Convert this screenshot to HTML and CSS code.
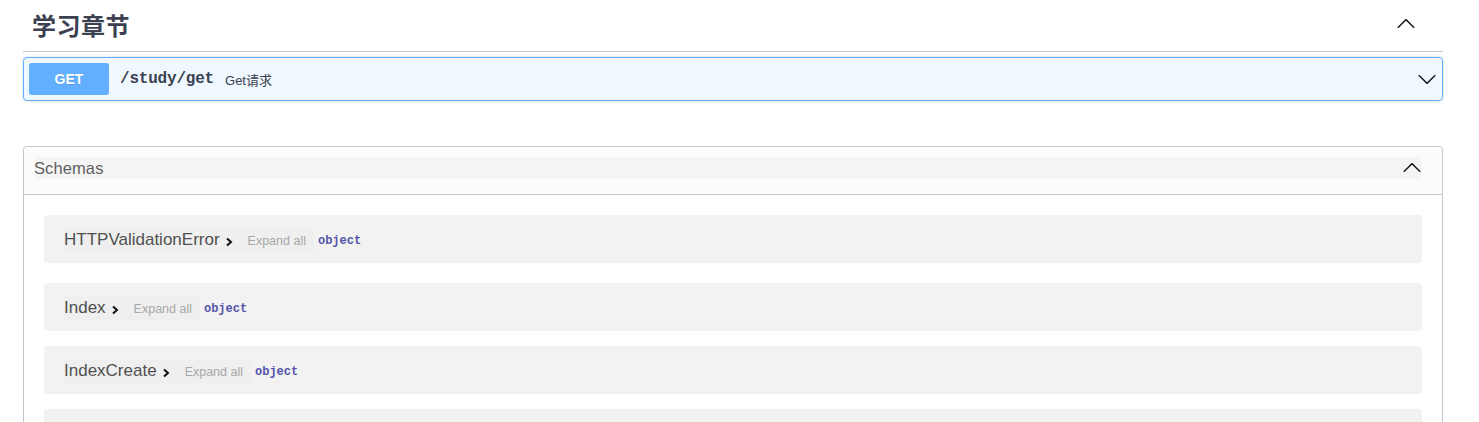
FILE: index.html
```html
<!DOCTYPE html>
<html lang="zh">
<head>
<meta charset="utf-8">
<title>Swagger</title>
<link rel="stylesheet" href="styles.css">
</head>
<body>
<div class="wrapper">
  <h3 class="tag">
    <span class="tag-name">学习章节</span>
    <svg class="arrow up" viewBox="0 0 20 20" width="20" height="20"><path d="M17.418 6.109c.272-.268.709-.268.979 0s.271.701 0 .969l-7.908 7.83c-.27.268-.707.268-.979 0l-7.908-7.83c-.27-.268-.27-.701 0-.969.271-.268.709-.268.979 0L10 13.25l7.418-7.141z"/></svg>
  </h3>

  <div class="opblock">
    <span class="method">GET</span>
    <span class="path">/study/get</span>
    <span class="desc">Get请求</span>
    <svg class="arrow down" viewBox="0 0 20 20" width="20" height="20"><path d="M17.418 6.109c.272-.268.709-.268.979 0s.271.701 0 .969l-7.908 7.83c-.27.268-.707.268-.979 0l-7.908-7.83c-.27-.268-.27-.701 0-.969.271-.268.709-.268.979 0L10 13.25l7.418-7.141z"/></svg>
  </div>

  <section class="models">
    <div class="models-head">
      <div class="models-bar">
        <span class="models-title">Schemas</span>
        <svg class="arrow up" viewBox="0 0 20 20" width="20" height="20"><path d="M17.418 6.109c.272-.268.709-.268.979 0s.271.701 0 .969l-7.908 7.83c-.27.268-.707.268-.979 0l-7.908-7.83c-.27-.268-.27-.701 0-.969.271-.268.709-.268.979 0L10 13.25l7.418-7.141z"/></svg>
      </div>
    </div>
    <div class="models-body">
      <div class="model first">
        <span class="model-name">HTTPValidationError<svg class="caret" viewBox="0 0 10 12" width="10" height="12"><path d="M3 2.5l4 3.5-4 3.5"/></svg></span>
        <span class="expand">Expand all</span>
        <span class="ptype">object</span>
      </div>
      <div class="model">
        <span class="model-name">Index<svg class="caret" viewBox="0 0 10 12" width="10" height="12"><path d="M3 2.5l4 3.5-4 3.5"/></svg></span>
        <span class="expand">Expand all</span>
        <span class="ptype">object</span>
      </div>
      <div class="model">
        <span class="model-name">IndexCreate<svg class="caret" viewBox="0 0 10 12" width="10" height="12"><path d="M3 2.5l4 3.5-4 3.5"/></svg></span>
        <span class="expand">Expand all</span>
        <span class="ptype">object</span>
      </div>
      <div class="model"></div>
    </div>
  </section>
</div>
</body>
</html>
```

FILE: styles.css
```css
* { box-sizing: border-box; }
html, body {
  margin: 0;
  padding: 0;
  background: #fff;
  overflow: hidden;
}
body {
  font-family: "Liberation Sans", Arial, "Noto Sans CJK SC", sans-serif;
  color: #3b4151;
}
.wrapper {
  width: 1420px;
  margin-left: 23px;
}
.tag {
  margin: 0;
  height: 52px;
  padding: 0 27px 3px 9px;
  display: flex;
  align-items: center;
  justify-content: space-between;
  border-bottom: 1px solid rgba(59, 65, 81, 0.3);
}
.tag-name {
  font-family: "Noto Sans CJK SC", "Liberation Sans", sans-serif;
  font-size: 24px;
  font-weight: 700;
  color: #3b4151;
  letter-spacing: 0.5px;
}
.arrow { fill: #1b1b1b; display: block; }
.arrow.up { transform: rotate(180deg); }
.tag .arrow { margin-right: 0; }

.opblock {
  margin-top: 5px;
  height: 44px;
  border: 1px solid #61affe;
  background: rgba(97, 175, 254, 0.1);
  border-radius: 4px;
  box-shadow: 0 0 3px rgba(0, 0, 0, 0.19);
  display: flex;
  align-items: center;
  padding: 0 5px;
}
.method {
  width: 80px;
  height: 32px;
  border-radius: 3px;
  background: #61affe;
  color: #fff;
  font-weight: 700;
  font-size: 14px;
  display: flex;
  align-items: center;
  justify-content: center;
  text-shadow: 0 1px 0 rgba(0, 0, 0, 0.1);
}
.path {
  font-family: "Liberation Mono", monospace;
  font-weight: 700;
  font-size: 16px;
  color: #3b4151;
  padding: 0 10px 0 11px;
  letter-spacing: -0.2px;
}
.desc {
  font-family: "Liberation Sans", "Noto Sans CJK SC", sans-serif;
  font-size: 13px;
  color: #3b4151;
  flex: 1;
  padding-left: 1px;
}

.models {
  margin-top: 45px;
  border: 1px solid rgba(59, 65, 81, 0.3);
  border-radius: 4px;
  height: 400px;
}
.models-head {
  height: 48px;
  border-bottom: 1px solid rgba(59, 65, 81, 0.3);
  background: #fcfcfc;
  padding: 10px 20px 0 10px;
  border-radius: 4px 4px 0 0;
}
.models-bar {
  height: 22px;
  background: #f5f5f5;
  display: flex;
  align-items: center;
  justify-content: space-between;
}
.models-title {
  font-size: 16.5px;
  color: #606060;
  letter-spacing: 0.1px;
}
.models-bar .arrow { margin-right: 0; }

.models-body {
  padding: 20px 20px 0;
}
.model {
  height: 48px;
  border-radius: 4px;
  background: rgba(0, 0, 0, 0.05);
  margin-bottom: 15px;
  display: flex;
  align-items: center;
  padding: 2px 0 0 20px;
}
.model.first { margin-bottom: 20px; }
.model-name {
  display: flex;
  align-items: center;
  height: 23px;
  font-size: 17px;
  color: #505050;
  padding-right: 9px;
  background: rgba(0, 0, 0, 0.012);
}
.caret {
  margin-left: 4px;
  margin-top: 4px;
  fill: none;
  stroke: #111;
  stroke-width: 2;
}
.expand {
  font-size: 12.5px;
  color: #a8a8a8;
  height: 23px;
  display: flex;
  align-items: center;
  padding: 2px 8px 0 5px;
  background: rgba(0, 0, 0, 0.012);
}
.ptype {
  margin-left: 4px;
  font-family: "Liberation Mono", monospace;
  font-size: 12px;
  font-weight: 700;
  color: #55a;
  padding-top: 2px;
}
```
